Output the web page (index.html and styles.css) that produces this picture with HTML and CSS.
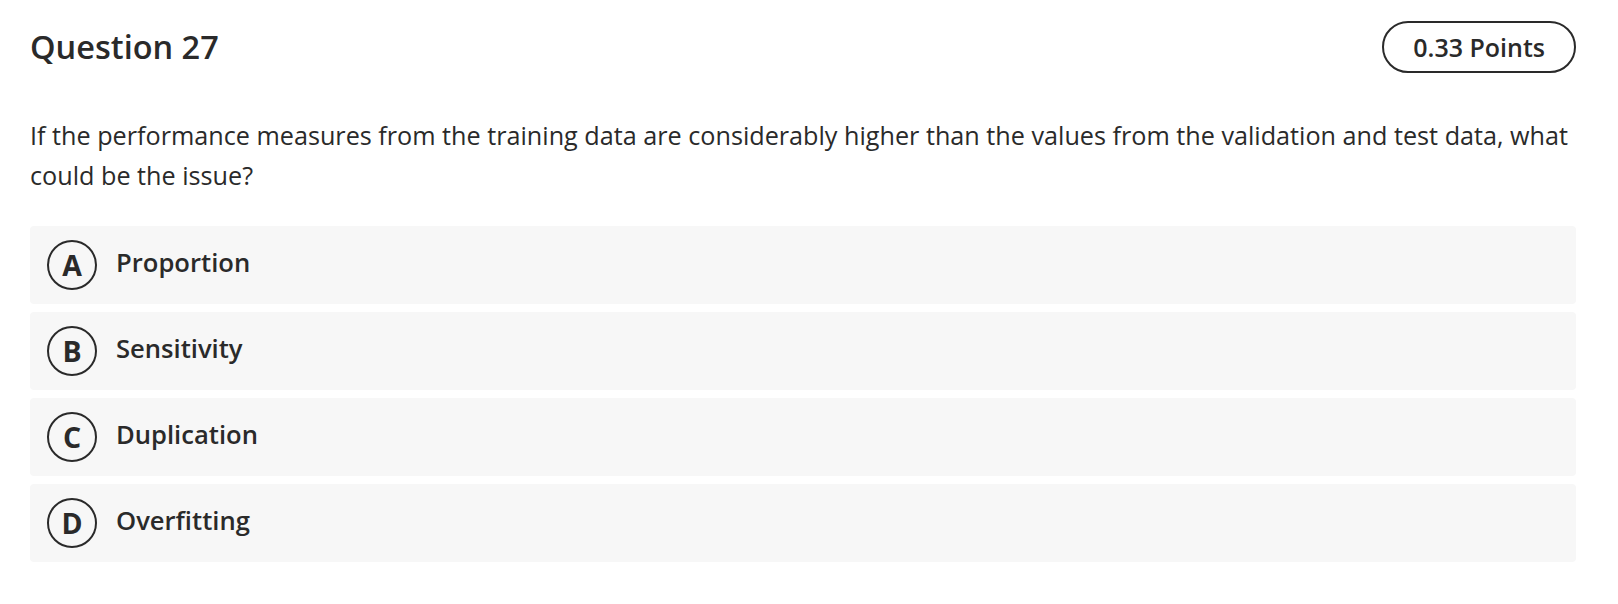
FILE: index.html
```html
<!DOCTYPE html>
<html lang="en">
<head>
<meta charset="utf-8">
<title>Question 27</title>
<link rel="stylesheet" href="styles.css">
</head>
<body>
<main class="question">
  <header class="q-header">
    <h1 class="q-title">Question 27</h1>
    <span class="q-points">0.33 Points</span>
  </header>
  <p class="q-text">If the performance measures from the training data are considerably higher than the values from the validation and test data, what could be the issue?</p>
  <ul class="options">
    <li class="option"><span class="opt-letter">A</span><span class="opt-label">Proportion</span></li>
    <li class="option"><span class="opt-letter">B</span><span class="opt-label">Sensitivity</span></li>
    <li class="option"><span class="opt-letter">C</span><span class="opt-label">Duplication</span></li>
    <li class="option"><span class="opt-letter">D</span><span class="opt-label">Overfitting</span></li>
  </ul>
</main>
</body>
</html>
```

FILE: styles.css
```css
html, body {
  margin: 0;
  padding: 0;
  background: #ffffff;
}

body {
  font-family: "Open Sans", "Noto Sans", "Liberation Sans", sans-serif;
  color: #2a2a2a;
}

.question {
  padding: 21px 42px 0 30px;
}

.q-header {
  display: flex;
  align-items: center;
  justify-content: space-between;
  height: 52px;
}

.q-title {
  margin: 0;
  font-size: 32.5px;
  font-weight: 600;
  line-height: 1;
  color: #2a2a2a;
}

.q-points {
  box-sizing: border-box;
  height: 52px;
  padding: 0 29px;
  border: 2px solid #2a2a2a;
  border-radius: 26px;
  display: inline-flex;
  align-items: center;
  font-size: 25px;
  font-weight: 600;
}

.q-text {
  margin: 43px 0 0;
  font-size: 25.2px;
  line-height: 39.5px;
  font-weight: 400;
}

.options {
  list-style: none;
  margin: 31px 0 0;
  padding: 0;
  display: flex;
  flex-direction: column;
  gap: 8px;
}

.option {
  box-sizing: border-box;
  height: 78px;
  background: #f7f7f7;
  border-radius: 4px;
  display: flex;
  align-items: center;
  padding-left: 17px;
  gap: 19px;
}

.opt-letter {
  box-sizing: border-box;
  width: 50px;
  height: 50px;
  border: 2px solid #2a2a2a;
  border-radius: 50%;
  display: flex;
  align-items: center;
  justify-content: center;
  font-size: 28.5px;
  font-weight: 700;
  line-height: 1;
}

.opt-label {
  font-size: 25.6px;
  font-weight: 600;
  margin-bottom: 5px;
}
```
